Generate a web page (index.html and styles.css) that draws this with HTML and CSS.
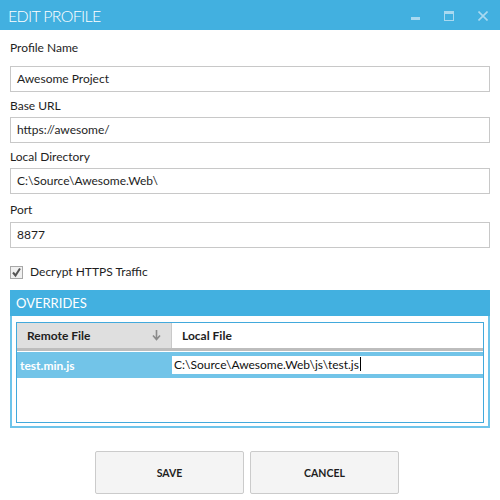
FILE: index.html
```html
<!DOCTYPE html>
<html>
<head>
<meta charset="utf-8">
<link rel="stylesheet" href="styles.css">
</head>
<body>
<div class="window">
  <header class="titlebar">
    <span class="title">EDIT PROFILE</span>
    <div class="controls">
      <svg class="ctl" width="9" height="9" viewBox="0 0 9 9"><rect x="0" y="6" width="9" height="3" fill="#a9d9f0"/></svg>
      <svg class="ctl" width="10" height="10" viewBox="0 0 10 10"><rect x="0.5" y="0.5" width="9" height="9" fill="none" stroke="#a9d9f0"/><rect x="0" y="0" width="10" height="3" fill="#a9d9f0"/></svg>
      <svg class="ctl" width="10" height="10" viewBox="0 0 10 10"><path d="M0.5 0.5 L9.5 9.5 M9.5 0.5 L0.5 9.5" stroke="#a9d9f0" stroke-width="1.6"/></svg>
    </div>
  </header>
  <main class="form">
    <label class="label first">Profile Name</label>
    <div class="input">Awesome Project</div>
    <label class="label">Base URL</label>
    <div class="input">https://awesome/</div>
    <label class="label">Local Directory</label>
    <div class="input">C:\Source\Awesome.Web\</div>
    <label class="label port">Port</label>
    <div class="input">8877</div>
    <div class="check-row">
      <span class="checkbox"><svg width="11" height="11" viewBox="0 0 11 11"><path d="M2 5.5 L4.5 8.5 L9 1.5" fill="none" stroke="#555" stroke-width="2"/></svg></span>
      <span class="check-label">Decrypt HTTPS Traffic</span>
    </div>
    <section class="panel">
      <div class="panel-head">OVERRIDES</div>
      <div class="panel-body">
        <div class="grid">
          <div class="grid-head">
            <div class="col col-remote sorted"><span>Remote File</span><svg width="9" height="11" viewBox="0 0 9 11"><path d="M4.5 0 V9 M1 5.5 L4.5 9.5 L8 5.5" fill="none" stroke="#8a8a8a" stroke-width="1.6"/></svg></div>
            <div class="col col-local"><span>Local File</span></div>
          </div>
          <div class="grid-row">
            <div class="cell cell-remote">test.min.js</div>
            <div class="cell cell-local"><span class="editor">C:\Source\Awesome.Web\js\test.js<span class="caret"></span></span></div>
          </div>
        </div>
      </div>
    </section>
    <div class="buttons">
      <button class="btn">SAVE</button>
      <button class="btn">CANCEL</button>
    </div>
  </main>
</div>
</body>
</html>
```
FILE: styles.css
```css
* { box-sizing: border-box; }
html, body { margin: 0; padding: 0; background: #fff; }
body {
  font-family: "Lato", "Noto Sans", sans-serif;
  font-size: 12px;
  color: #1e1e1e;
  width: 500px;
  height: 500px;
  overflow: hidden;
}
.titlebar {
  height: 30px;
  background: #42b0e0;
  display: flex;
  align-items: center;
  justify-content: space-between;
  padding: 0 12px 0 8px;
}
.title {
  color: #fff;
  font-size: 16px;
  font-weight: 300;
  letter-spacing: -0.7px;
}
.controls {
  display: flex;
  align-items: center;
  gap: 24px;
  margin-top: 1px;
}
.form {
  padding: 0 10px;
  display: flex;
  flex-direction: column;
}
.label {
  display: block;
  line-height: 16px;
  margin-top: 6px;
  margin-bottom: 3px;
}
.label.first { margin-top: 10px; margin-bottom: 10px; }
.label.port { margin-top: 8px; margin-bottom: 4px; }
.input {
  height: 26px;
  border: 1px solid #c8c8c8;
  padding: 0 6px;
  line-height: 24px;
  color: #1e1e1e;
}
.check-row {
  display: flex;
  align-items: center;
  gap: 7px;
  margin-top: 17px;
  height: 14px;
}
.checkbox {
  width: 13px;
  height: 13px;
  border: 1px solid #a8a8a8;
  background: #f0f0f0;
  display: flex;
  align-items: center;
  justify-content: center;
}
.check-label { line-height: 14px; }
.panel {
  margin-top: 11px;
}
.panel-head {
  height: 26px;
  background: #42b0e0;
  color: #fff;
  font-size: 13px;
  line-height: 27px;
  padding-left: 6px;
}
.panel-body {
  border: 2px solid #6ec4ea;
  border-top: none;
  padding: 6px 4px 3px 4px;
}
.grid {
  height: 101px;
  border: 1px solid #42a9dc;
  background: #fff;
}
.grid-head {
  display: flex;
  height: 28px;
  border-bottom: 3px solid #bdbdbd;
}
.col {
  display: flex;
  align-items: center;
  font-weight: 700;
  color: #1e1e1e;
}
.col-remote {
  width: 155px;
  background: #dfdfdf;
  justify-content: space-between;
  padding: 0 10px 0 10px;
  border-right: 1px solid #c9c9c9;
}
.col-local {
  flex: 1;
  padding-left: 10px;
}
.grid-row {
  display: flex;
  height: 26px;
  margin-top: 1px;
  background: #72c4e8;
  align-items: center;
}
.cell-remote {
  width: 155px;
  padding-left: 3px;
  color: #fff;
  font-weight: 700;
}
.cell-local {
  flex: 1;
  padding-right: 0;
}
.editor {
  display: block;
  background: #fff;
  height: 18px;
  line-height: 18px;
  padding-left: 2px;
  color: #111;
}
.caret {
  display: inline-block;
  width: 1px;
  height: 14px;
  background: #000;
  vertical-align: -2px;
  margin-left: 1px;
}
.buttons {
  display: flex;
  justify-content: center;
  gap: 6px;
  margin-top: 23px;
  padding-right: 6px;
}
.btn {
  width: 149px;
  height: 43px;
  background: #f4f4f4;
  border: 1px solid #cbcbcb;
  border-radius: 2px;
  font-family: "Lato", "Noto Sans", sans-serif;
  font-weight: 700;
  font-size: 10.5px;
  color: #1e1e1e;
  padding: 0;
}
```
